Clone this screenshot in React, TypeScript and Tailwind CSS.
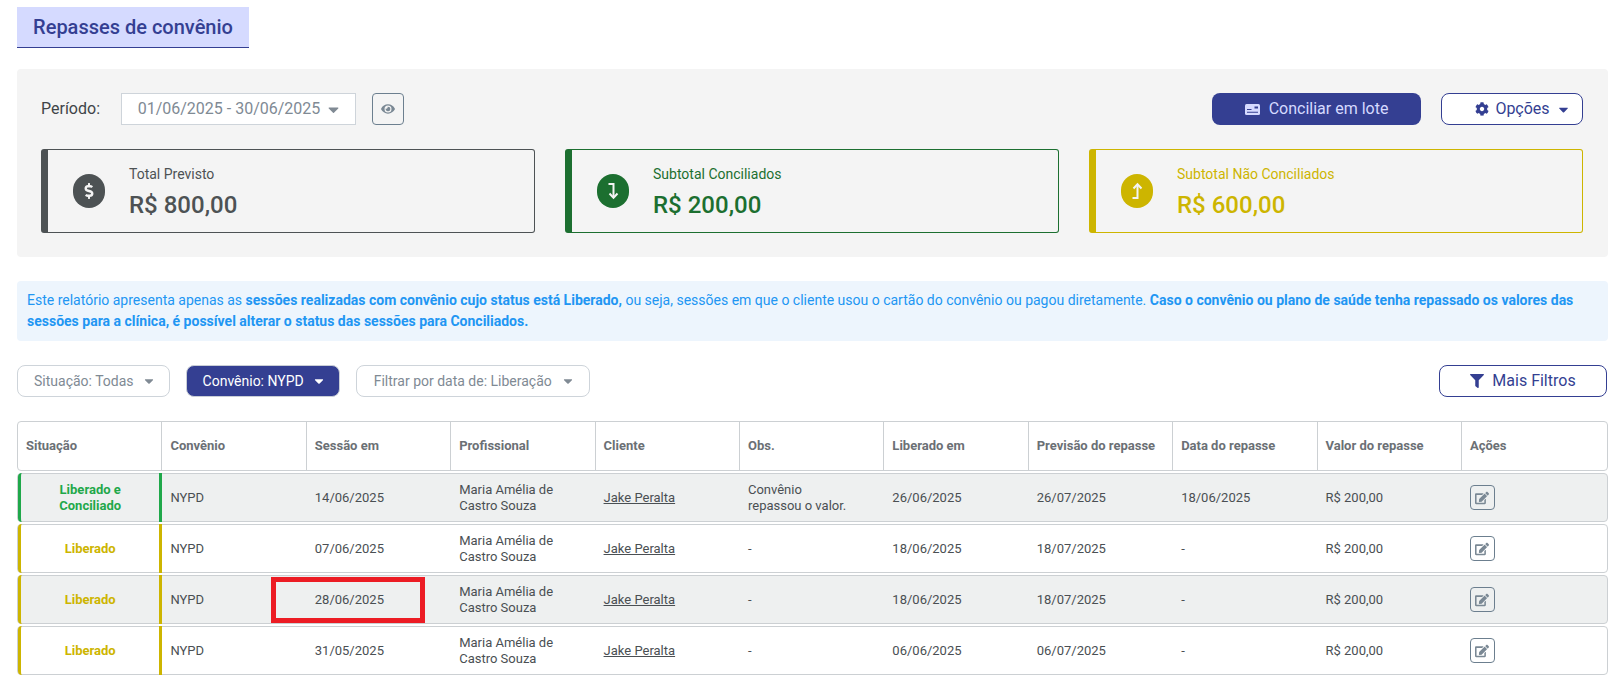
import { FaCaretDown, FaCog, FaDollarSign, FaEdit, FaEye, FaFilter } from "react-icons/fa";

const headers = ["Situação", "Convênio", "Sessão em", "Profissional", "Cliente", "Obs.", "Liberado em", "Previsão do repasse", "Data do repasse", "Valor do repasse", "Ações"];

const rows = [
  { status: "Liberado e Conciliado", green: true, session: "14/06/2025", obs: "Convênio repassou o valor.", released: "26/06/2025", forecast: "26/07/2025", date: "18/06/2025" },
  { status: "Liberado", green: false, session: "07/06/2025", obs: "-", released: "18/06/2025", forecast: "18/07/2025", date: "-" },
  { status: "Liberado", green: false, session: "28/06/2025", obs: "-", released: "18/06/2025", forecast: "18/07/2025", date: "-" },
  { status: "Liberado", green: false, session: "31/05/2025", obs: "-", released: "06/06/2025", forecast: "06/07/2025", date: "-" },
];

function ArrowDownIcon() {
  return (
    <svg width="12" height="18" viewBox="0 0 12 18" fill="none" stroke="currentColor" strokeWidth="2">
      <path d="M1.5 2H6.5V15" />
      <path d="M2.5 11.5L6.5 15.8L10.5 11.5" />
    </svg>
  );
}

function ArrowUpIcon() {
  return (
    <svg width="12" height="18" viewBox="0 0 12 18" fill="none" stroke="currentColor" strokeWidth="2">
      <path d="M1.5 16H6.5V3" />
      <path d="M2.5 6.5L6.5 2.2L10.5 6.5" />
    </svg>
  );
}

function CardIcon() {
  return (
    <svg width="15" height="11" viewBox="0 0 15 11">
      <rect width="15" height="11" rx="1.5" fill="currentColor" />
      <path d="M9.5 2.5H13V4.5H9.5ZM2 5H6.5V6H2ZM2 7.8H13V8.8H2Z" fill="#343f92" />
    </svg>
  );
}

function Cell({ children }: { children: React.ReactNode }) {
  return <div className="flex items-center px-2 leading-4">{children}</div>;
}

function Stat({ label, value, icon, border, text, iconBg }: { label: string; value: string; icon: React.ReactNode; border: string; text: string; iconBg: string }) {
  return (
    <div className={`flex h-[84px] flex-1 items-center rounded-[3px] border border-l-[7px] ${border}`}>
      <div className={`ml-[25px] flex h-[34px] w-8 items-center justify-center rounded-full text-[16px] text-[#f4f4f4] ${iconBg}`}>{icon}</div>
      <div className={`ml-6 pt-[3px] ${text}`}>
        <div className="text-[14px] leading-4">{label}</div>
        <div className="mt-[9px] text-[24px] leading-7 font-medium">{value}</div>
      </div>
    </div>
  );
}

function Pill({ label, active }: { label: string; active?: boolean }) {
  return (
    <button className={`flex h-8 items-center gap-[8px] rounded-lg border pl-4 pr-[13px] text-[14px] ${active ? "border-[#c9ced6] bg-[#343f92] text-white" : "border-[#ced4da] bg-white text-[#808a94]"}`}>
      {label}
      <FaCaretDown className="text-[14px]" />
    </button>
  );
}

export default function App() {
  return (
    <div className="relative min-h-[697px] bg-white pl-[17px] pr-[13px] pt-[7px] font-['Roboto',sans-serif]">
      <div className="flex h-[41px] w-[232px] items-center justify-center border-b border-[#343f92] bg-[#d5daff] text-[20px] font-medium text-[#343f92]">Repasses de convênio</div>

      <section className="mt-[21px] rounded-[4px] bg-[#f4f4f4] pb-6 pl-6 pr-[25px] pt-6">
        <div className="flex h-8 items-center">
          <span className="text-[16px] text-[#3f4448]">Período:</span>
          <div className="ml-[21px] flex h-8 w-[235px] items-center justify-center gap-[5px] border border-[#ced4da] bg-white pl-[3px] text-[16px] text-[#808a94]">
            01/06/2025 - 30/06/2025
            <FaCaretDown className="text-[17px]" />
          </div>
          <button className="ml-4 flex h-8 w-8 items-center justify-center rounded-[4px] border border-[#6c7f8f] text-[14px] text-[#7a8894]"><FaEye /></button>
          <button className="ml-auto flex h-8 w-[209px] items-center justify-center gap-[9px] rounded-lg bg-[#343f92] text-[16px] text-[#d5daff]"><CardIcon />Conciliar em lote</button>
          <button className="ml-5 flex h-8 w-[142px] items-center justify-center gap-[6px] rounded-lg border border-[#343f92] bg-white pl-[22px] text-[16px] text-[#343f92]"><FaCog className="text-[14px]" />Opções<FaCaretDown className="text-[15px]" /></button>
        </div>
        <div className="mt-6 flex gap-[30px]">
          <Stat label="Total Previsto" value="R$ 800,00" icon={<FaDollarSign />} border="border-[#4d5254]" text="text-[#4d5254]" iconBg="bg-[#4d5254]" />
          <Stat label="Subtotal Conciliados" value="R$ 200,00" icon={<ArrowDownIcon />} border="border-[#1c6f30]" text="text-[#1c6f30]" iconBg="bg-[#1c6f30]" />
          <Stat label="Subtotal Não Conciliados" value="R$ 600,00" icon={<ArrowUpIcon />} border="border-[#cdb500]" text="text-[#cdb500]" iconBg="bg-[#cdb500]" />
        </div>
      </section>

      <p className="mt-6 rounded-[4px] bg-[#edf5fd] py-[9px] pl-[10px] pr-2 text-[14px] leading-[21px] text-[#2196f3]">
        Este relatório apresenta apenas as <b className="font-bold">sessões realizadas com convênio cujo status está Liberado,</b> ou seja, sessões em que o cliente usou o cartão do convênio ou pagou diretamente. <b className="font-bold">Caso o convênio ou plano de saúde tenha repassado os valores das sessões para a clínica, é possível alterar o status das sessões para Conciliados.</b>
      </p>

      <div className="mt-6 flex items-center gap-4">
        <Pill label="Situação: Todas" />
        <Pill label="Convênio: NYPD" active />
        <button className="flex h-8 items-center gap-[9px] rounded-lg border border-[#ced4da] bg-white pl-[17px] pr-[14px] text-[14px] text-[#808a94]">
          Filtrar por data de: Liberação
          <FaCaretDown className="text-[14px]" />
        </button>
        <button className="ml-auto mr-px flex h-8 w-[168px] items-center justify-center gap-2 rounded-lg border border-[#343f92] text-[16px] text-[#343f92]"><FaFilter className="text-[14px]" />Mais Filtros</button>
      </div>

      <div className="mt-6 text-[13px] text-[#4a4f53]">
        <div className="grid h-[50px] grid-cols-[143.4px_repeat(9,144.4px)_1fr] rounded-[4px] border border-[#ccd0d3] font-bold text-[#6b7075]">
          {headers.map((h, i) => (
            <div key={h} className={`flex items-center px-2 ${i > 0 ? "border-l border-[#ccd0d3]" : ""}`}>{h}</div>
          ))}
        </div>
        {rows.map((r, i) => (
          <div key={i} className={`mt-[2px] grid h-[49px] grid-cols-[repeat(10,144.4px)_1fr] rounded-[4px] border border-[#ccd0d3] ${i % 2 === 0 ? "bg-[#eef0f0]" : "bg-white"}`}>
            <div className={`-my-px flex items-center justify-center rounded-l-[4px] border-x-[3px] px-5 text-center font-bold leading-4 ${r.green ? "border-[#1fa84a] text-[#1fa84a]" : "border-[#cdb500] text-[#cdb500]"}`}>{r.status}</div>
            <Cell>NYPD</Cell>
            <Cell>{r.session}</Cell>
            <Cell>Maria Amélia de Castro Souza</Cell>
            <Cell><u>Jake Peralta</u></Cell>
            <Cell><span className="max-w-[100px]">{r.obs}</span></Cell>
            <Cell>{r.released}</Cell>
            <Cell>{r.forecast}</Cell>
            <Cell>{r.date}</Cell>
            <Cell>R$ 200,00</Cell>
            <Cell>
              <button className="flex h-[25px] w-[25px] items-center justify-center rounded-[4px] border border-[#6c7f8f] text-[14px] text-[#7a8894]"><FaEdit /></button>
            </Cell>
          </div>
        ))}
      </div>

      <div className="absolute left-[271px] top-[577px] h-[46px] w-[154px] border-[5px] border-[#ec1c24]" />
    </div>
  );
}
